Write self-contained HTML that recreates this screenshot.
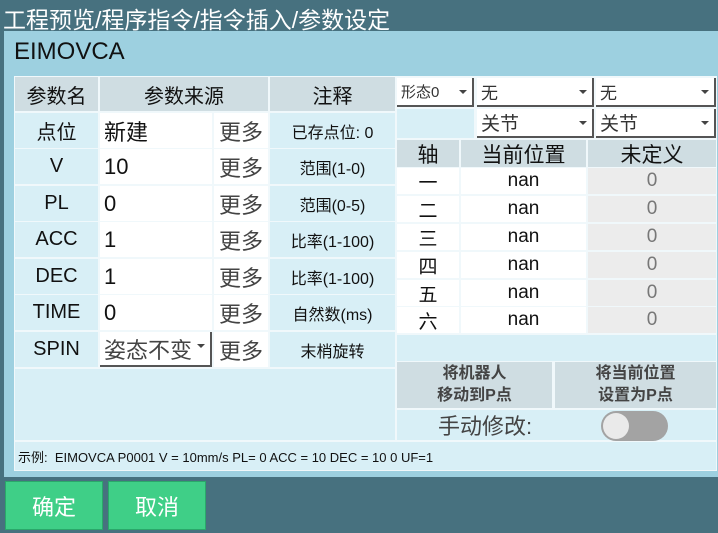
<html><head><style>
body{margin:0;width:718px;height:533px;background:#47717f;position:relative;overflow:hidden;font-family:"Liberation Sans","Noto Sans CJK SC",sans-serif;}
.a{position:absolute;display:flex;align-items:center;justify-content:center;box-sizing:border-box;color:#111;}
.h{background:#cfdde2;font-size:20px;}
.l{background:#d8eff6;font-size:20px;}
.w{background:#fff;font-size:22px;justify-content:flex-start;padding-left:4px;}
.m{background:#fff;font-size:22px;color:#444;}
.n{background:#d8eff6;font-size:16px;}
.r{background:#fff;font-size:19px;}
.u{background:#ececec;font-size:19px;color:#777;}
.dd{background:#fff;font-size:17px;justify-content:flex-start;padding-left:4px;color:#333;border-right:2px solid #555;border-bottom:2px solid #555;}
.dd:after{content:"";position:absolute;right:5px;top:12px;border:4px solid transparent;border-top:4px solid #444;}
.b{background:#cfdde2;font-size:16px;font-weight:bold;color:#444;line-height:22px;text-align:center;}
.g{background:#3fcf87;color:#fff;font-size:22px;border:1px solid #2aa86a;}
</style></head><body>
<div class="a" style="left:3px;top:4px;height:28px;color:#fff;font-size:23px;">工程预览/程序指令/指令插入/参数设定</div>
<div style="position:absolute;left:4px;top:31px;width:714px;height:446px;background:#9dd0e0;"></div>
<div class="a" style="left:14px;top:36px;height:32px;font-size:24px;">EIMOVCA</div>
<div style="position:absolute;left:14px;top:76px;width:703px;height:395px;background:#f0f8fb;"></div>

<div class="a h" style="left:15px;top:77px;width:83px;height:34px;">参数名</div>
<div class="a h" style="left:100px;top:77px;width:168px;height:34px;">参数来源</div>
<div class="a h" style="left:270px;top:77px;width:125px;height:34px;">注释</div>

<div class="a l" style="left:15px;top:113px;width:83px;height:35px;">点位</div><div class="a w" style="left:100px;top:113px;width:112px;height:35px;">新建</div><div class="a m" style="left:214px;top:113px;width:54px;height:35px;">更多</div><div class="a n" style="left:270px;top:113px;width:125px;height:35px;">已存点位: 0</div>
<div class="a l" style="left:15px;top:149px;width:83px;height:35px;">V</div><div class="a w" style="left:100px;top:149px;width:112px;height:35px;">10</div><div class="a m" style="left:214px;top:149px;width:54px;height:35px;">更多</div><div class="a n" style="left:270px;top:149px;width:125px;height:35px;">范围(1-0)</div>
<div class="a l" style="left:15px;top:186px;width:83px;height:35px;">PL</div><div class="a w" style="left:100px;top:186px;width:112px;height:35px;">0</div><div class="a m" style="left:214px;top:186px;width:54px;height:35px;">更多</div><div class="a n" style="left:270px;top:186px;width:125px;height:35px;">范围(0-5)</div>
<div class="a l" style="left:15px;top:222px;width:83px;height:35px;">ACC</div><div class="a w" style="left:100px;top:222px;width:112px;height:35px;">1</div><div class="a m" style="left:214px;top:222px;width:54px;height:35px;">更多</div><div class="a n" style="left:270px;top:222px;width:125px;height:35px;">比率(1-100)</div>
<div class="a l" style="left:15px;top:259px;width:83px;height:35px;">DEC</div><div class="a w" style="left:100px;top:259px;width:112px;height:35px;">1</div><div class="a m" style="left:214px;top:259px;width:54px;height:35px;">更多</div><div class="a n" style="left:270px;top:259px;width:125px;height:35px;">比率(1-100)</div>
<div class="a l" style="left:15px;top:295px;width:83px;height:35px;">TIME</div><div class="a w" style="left:100px;top:295px;width:112px;height:35px;">0</div><div class="a m" style="left:214px;top:295px;width:54px;height:35px;">更多</div><div class="a n" style="left:270px;top:295px;width:125px;height:35px;">自然数(ms)</div>
<div class="a l" style="left:15px;top:332px;width:83px;height:35px;">SPIN</div><div class="a w dd" style="left:100px;top:332px;width:112px;height:35px;font-size:22px;color:#444;">姿态不变</div><div class="a m" style="left:214px;top:332px;width:54px;height:35px;">更多</div><div class="a n" style="left:270px;top:332px;width:125px;height:35px;">末梢旋转</div>
<div class="a l" style="left:15px;top:369px;width:380px;height:71px;"></div>

<div class="a dd" style="left:397px;top:78px;width:77px;height:29px;font-size:15px;">形态0</div>
<div class="a dd" style="left:477px;top:78px;width:117px;height:29px;">无</div>
<div class="a dd" style="left:596px;top:78px;width:120px;height:29px;">无</div>
<div class="a l" style="left:397px;top:109px;width:77px;height:29px;"></div>
<div class="a dd" style="left:477px;top:109px;width:117px;height:29px;font-size:19px;">关节</div>
<div class="a dd" style="left:596px;top:109px;width:120px;height:29px;font-size:19px;">关节</div>
<div class="a h" style="left:397px;top:140px;width:62px;height:27px;font-size:21px;">轴</div>
<div class="a h" style="left:461px;top:140px;width:125px;height:27px;font-size:21px;">当前位置</div>
<div class="a h" style="left:588px;top:140px;width:128px;height:27px;font-size:21px;">未定义</div>

<div class="a r" style="left:397px;top:168px;width:62px;height:26px;">一</div><div class="a r" style="left:461px;top:168px;width:125px;height:26px;">nan</div><div class="a u" style="left:588px;top:168px;width:128px;height:26px;">0</div>
<div class="a r" style="left:397px;top:196px;width:62px;height:26px;">二</div><div class="a r" style="left:461px;top:196px;width:125px;height:26px;">nan</div><div class="a u" style="left:588px;top:196px;width:128px;height:26px;">0</div>
<div class="a r" style="left:397px;top:224px;width:62px;height:26px;">三</div><div class="a r" style="left:461px;top:224px;width:125px;height:26px;">nan</div><div class="a u" style="left:588px;top:224px;width:128px;height:26px;">0</div>
<div class="a r" style="left:397px;top:252px;width:62px;height:26px;">四</div><div class="a r" style="left:461px;top:252px;width:125px;height:26px;">nan</div><div class="a u" style="left:588px;top:252px;width:128px;height:26px;">0</div>
<div class="a r" style="left:397px;top:280px;width:62px;height:26px;">五</div><div class="a r" style="left:461px;top:280px;width:125px;height:26px;">nan</div><div class="a u" style="left:588px;top:280px;width:128px;height:26px;">0</div>
<div class="a r" style="left:397px;top:307px;width:62px;height:26px;">六</div><div class="a r" style="left:461px;top:307px;width:125px;height:26px;">nan</div><div class="a u" style="left:588px;top:307px;width:128px;height:26px;">0</div>
<div class="a l" style="left:397px;top:335px;width:319px;height:26px;"></div>
<div class="a b" style="left:397px;top:362px;width:155px;height:46px;">将机器人<br>移动到P点</div>
<div class="a b" style="left:555px;top:362px;width:161px;height:46px;">将当前位置<br>设置为P点</div>
<div class="a l" style="left:397px;top:410px;width:319px;height:30px;"></div>
<div class="a" style="left:438px;top:411px;height:28px;font-size:22px;color:#444;">手动修改:</div>
<div style="position:absolute;left:601px;top:411px;width:67px;height:30px;border-radius:15px;background:#a3a3a3;"></div>
<div style="position:absolute;left:603px;top:413px;width:26px;height:26px;border-radius:13px;background:#eaeaea;"></div>
<div class="a l" style="left:15px;top:442px;width:701px;height:28px;font-size:13px;justify-content:flex-start;padding-left:3px;">示例:&nbsp; EIMOVCA P0001 V = 10mm/s PL= 0 ACC = 10 DEC = 10 0 UF=1</div>

<div class="a g" style="left:5px;top:481px;width:98px;height:49px;">确定</div>
<div class="a g" style="left:108px;top:481px;width:98px;height:49px;">取消</div>
</body></html>
